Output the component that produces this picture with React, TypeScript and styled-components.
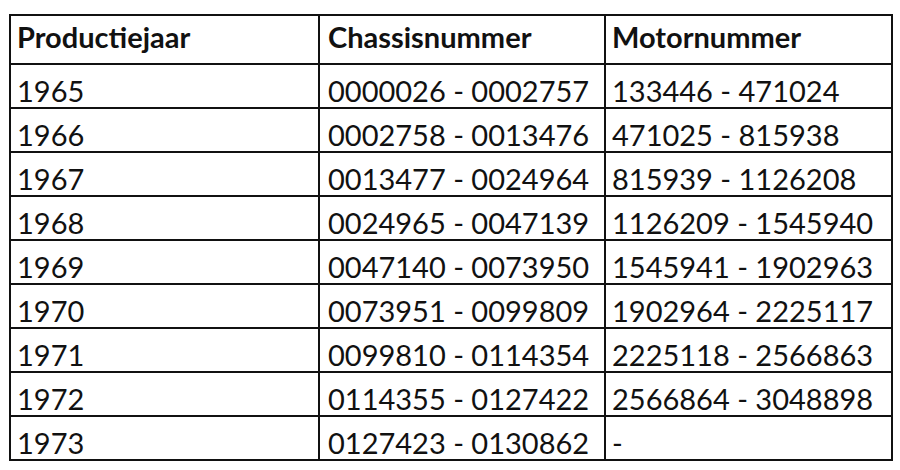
import React from 'react'
import styled, { createGlobalStyle } from 'styled-components';

const GlobalStyle = createGlobalStyle`
    html, body {
        margin: 0;
        padding: 0;
        background: #fff;
    }
`

const Page = styled.div`
    padding: 14px 0 0 9px;
    width: 900px;
    height: 470px;
    box-sizing: border-box;
    background: #fff;
`

const Table = styled.table`
    border-collapse: collapse;
    table-layout: fixed;
    width: 883px;
    font-family: Lato, "Open Sans", sans-serif;
    font-size: 29px;
    color: #111;
`

const HeadCell = styled.th<{ wide?: boolean }>`
    border: 2px solid #111;
    height: 49px;
    padding: 0 4px 12px ${({ wide }) => wide ? '8px' : '6px'};
    box-sizing: border-box;
    text-align: left;
    vertical-align: bottom;
    font-weight: 700;
    line-height: 1;
    white-space: nowrap;
`

const Cell = styled.td<{ wide?: boolean }>`
    border: 2px solid #111;
    height: 44px;
    padding: 0 4px 2px ${({ wide }) => wide ? '8px' : '6px'};
    box-sizing: border-box;
    vertical-align: bottom;
    line-height: 1;
    white-space: nowrap;
`

type Row = {
    year: string;
    chassis: string;
    motor: string;
};

const rows: Row[] = [
    { year: '1965', chassis: '0000026 - 0002757', motor: '133446 - 471024' },
    { year: '1966', chassis: '0002758 - 0013476', motor: '471025 - 815938' },
    { year: '1967', chassis: '0013477 - 0024964', motor: '815939 - 1126208' },
    { year: '1968', chassis: '0024965 - 0047139', motor: '1126209 - 1545940' },
    { year: '1969', chassis: '0047140 - 0073950', motor: '1545941 - 1902963' },
    { year: '1970', chassis: '0073951 - 0099809', motor: '1902964 - 2225117' },
    { year: '1971', chassis: '0099810 - 0114354', motor: '2225118 - 2566863' },
    { year: '1972', chassis: '0114355 - 0127422', motor: '2566864 - 3048898' },
    { year: '1973', chassis: '0127423 - 0130862', motor: '-' },
];

const App = () => {
    return (
        <Page>
            <GlobalStyle />
            <Table>
                <colgroup>
                    <col style={{ width: 309 }} />
                    <col style={{ width: 286 }} />
                    <col style={{ width: 287 }} />
                </colgroup>
                <thead>
                    <tr>
                        <HeadCell>Productiejaar</HeadCell>
                        <HeadCell wide>Chassisnummer</HeadCell>
                        <HeadCell>Motornummer</HeadCell>
                    </tr>
                </thead>
                <tbody>
                    {rows.map((r) => (
                        <tr key={r.year}>
                            <Cell>{r.year}</Cell>
                            <Cell wide>{r.chassis}</Cell>
                            <Cell>{r.motor}</Cell>
                        </tr>
                    ))}
                </tbody>
            </Table>
        </Page>
    )
};

export default App
